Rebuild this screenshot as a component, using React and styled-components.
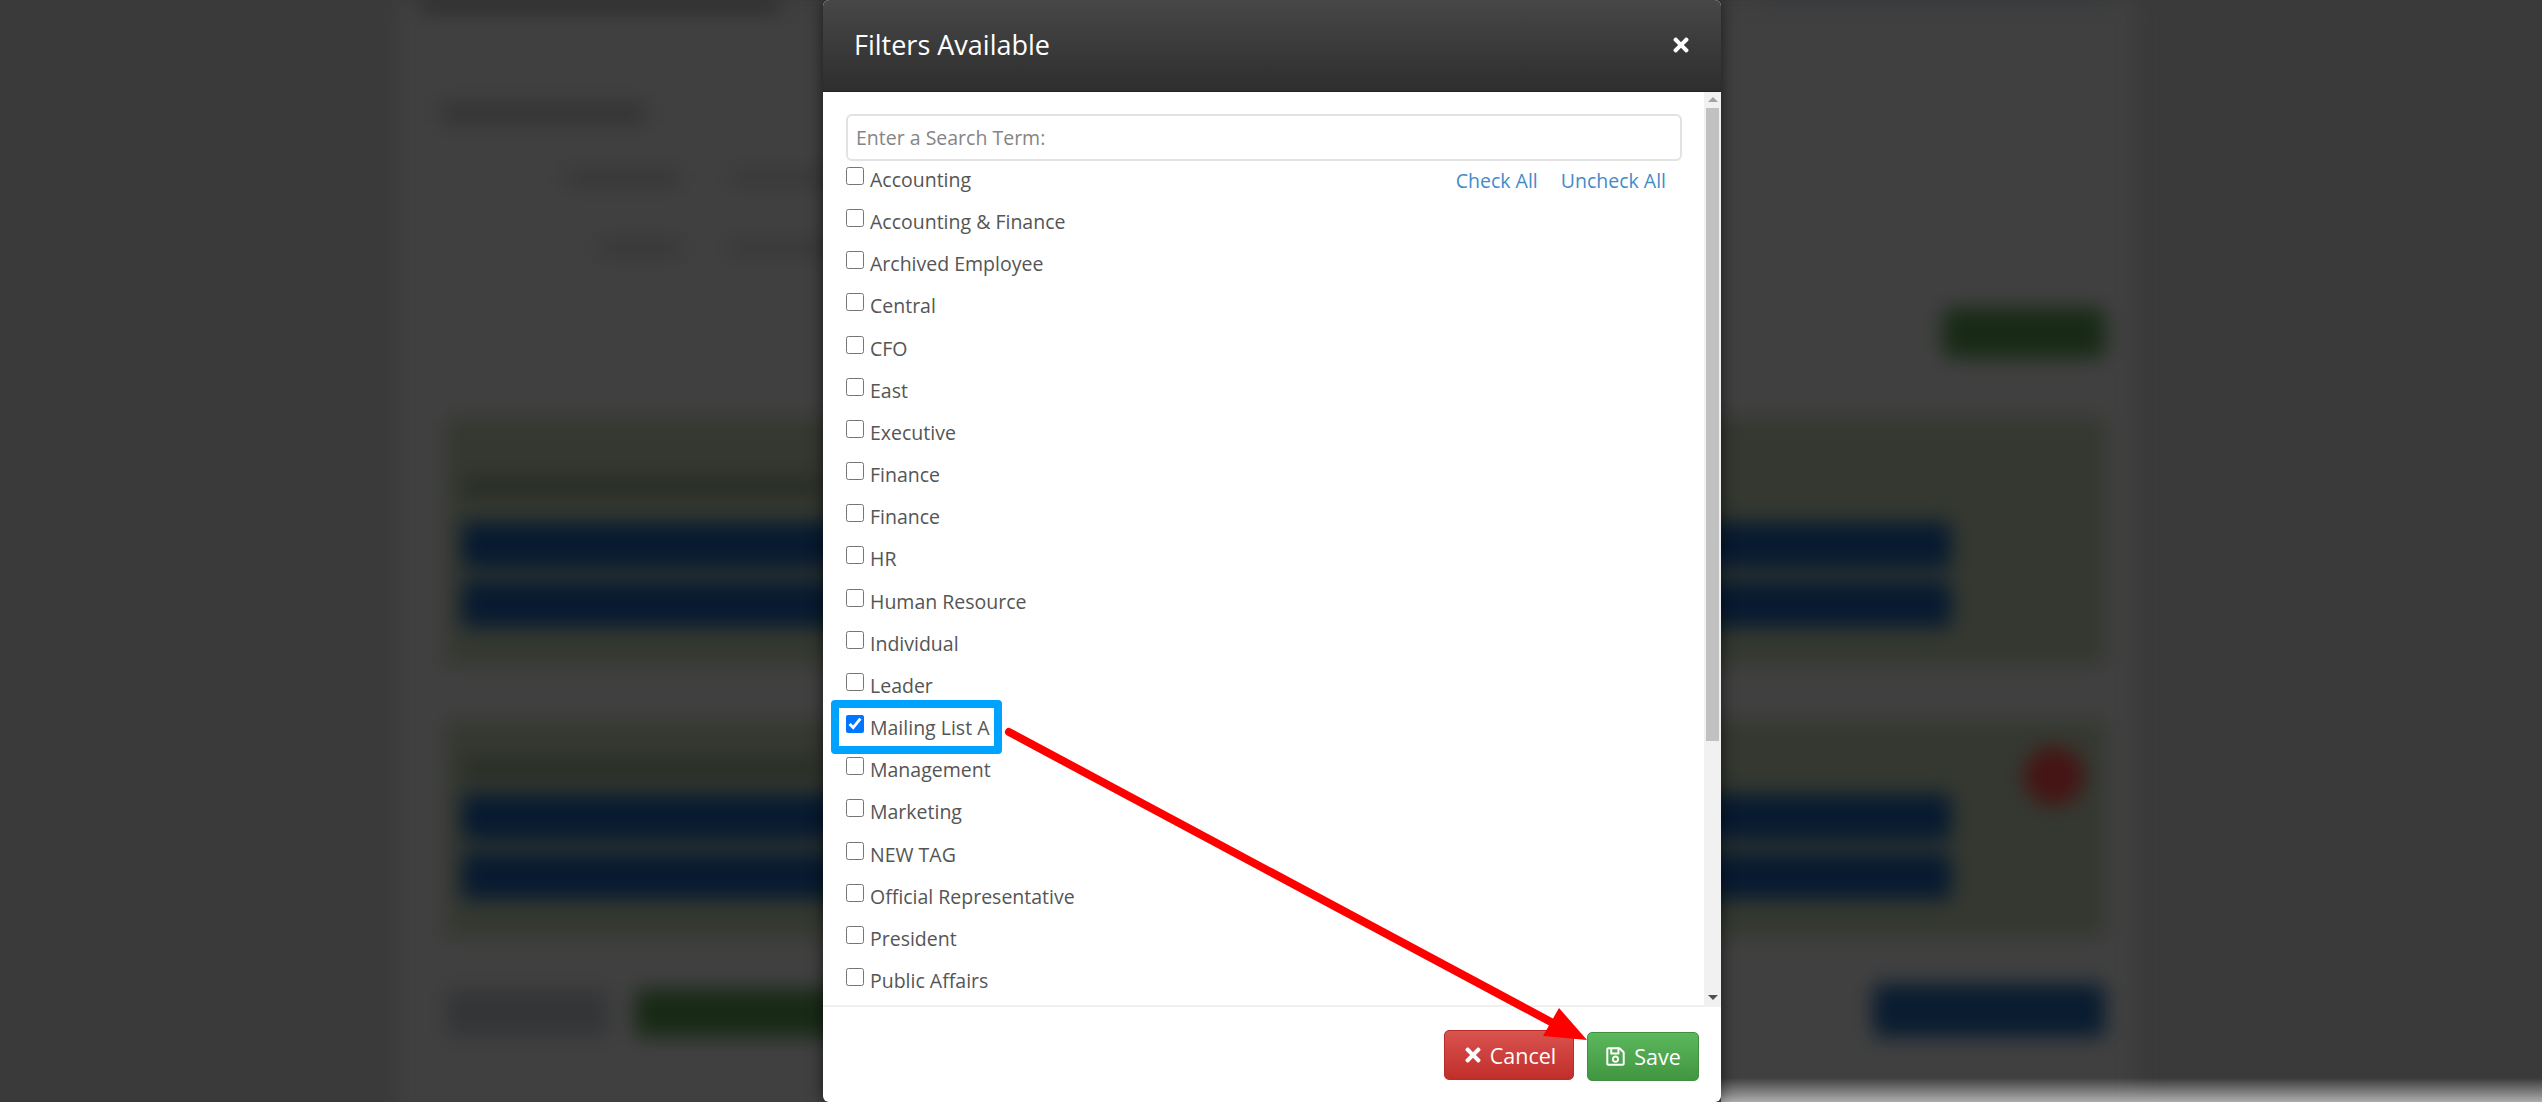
import React from 'react';
import styled, {createGlobalStyle} from 'styled-components';
import {FaTimes, FaRegSave} from 'react-icons/fa';

const GlobalStyle = createGlobalStyle`
  html, body {
    margin: 0;
    padding: 0;
    height: 100%;
    overflow: hidden;
    background: #3a3a3a;
  }
  * {
    box-sizing: border-box;
  }
`

const filters = [
  'Accounting', 'Accounting & Finance', 'Archived Employee', 'Central', 'CFO', 'East',
  'Executive', 'Finance', 'Finance', 'HR', 'Human Resource', 'Individual', 'Leader',
  'Mailing List A', 'Management', 'Marketing', 'NEW TAG', 'Official Representative',
  'President', 'Public Affairs',
];

export default function App() {
  return (
    <Screen>
      <GlobalStyle/>
      <Backdrop>
        <Sheet>
          <TopRow>
            <PageTitle/>
            <Crumbs/>
          </TopRow>
          <CardTitle/>
          <FieldRow $left={119} $top={46}><FieldLabel $width={115}/><FieldValue/></FieldRow>
          <FieldRow $left={154} $top={54}><FieldLabel $width={80}/><FieldValue/></FieldRow>
          <ActionRow><SmallButton $color="#182a16" $width={162} $height={50}/></ActionRow>
          <Panel $height={247} $top={60} $pad={58}>
            <PanelTitle $gap={26}/>
            <Bar/>
            <Bar/>
          </Panel>
          <Panel $height={216} $top={56} $pad={26}>
            <PanelHead>
              <PanelTitle $gap={14}/>
              <RemoveDot/>
            </PanelHead>
            <Bar/>
            <Bar/>
          </Panel>
          <FooterRow>
            <SmallButton $color="#343537" $width={162} $height={48}/>
            <SmallButton $color="#182a16" $width={300} $height={48}/>
            <SmallButton $color="#091c30" $width={232} $height={53} $push/>
          </FooterRow>
        </Sheet>
      </Backdrop>
      <BottomFade/>

      <Modal>
        <ModalHeader>
          <ModalTitle>Filters Available</ModalTitle>
          <CloseButton><FaTimes size={22}/></CloseButton>
        </ModalHeader>
        <ModalBody>
          <ListArea>
            <SearchInput placeholder="Enter a Search Term:"/>
            <CheckLinks>
              <CheckLink href="#">Check All</CheckLink>
              <CheckLink href="#">Uncheck All</CheckLink>
            </CheckLinks>
            {filters.map((name, i) => (
              <FilterRow key={i} $marked={name === 'Mailing List A'}>
                <FilterCheck type="checkbox" defaultChecked={name === 'Mailing List A'}/>
                <FilterName>{name}</FilterName>
              </FilterRow>
            ))}
          </ListArea>
          <ScrollTrack>
            <ScrollArrow $up/>
            <ScrollThumb/>
            <ScrollArrow/>
          </ScrollTrack>
        </ModalBody>
        <ModalFooter>
          <FooterButton $from="#d9534f" $to="#c12e2a" $border="#b92c28" $width={130} $height={50} $gap={6}>
            <FaTimes size={22}/>Cancel
          </FooterButton>
          <FooterButton $from="#5cb85c" $to="#419641" $border="#3e8f3e" $width={112} $height={49} $gap={8} $drop={2}>
            <FaRegSave size={21}/>Save
          </FooterButton>
        </ModalFooter>
      </Modal>

      <ArrowDrawing viewBox="0 0 2542 1102">
        <line x1="1009" y1="732" x2="1551" y2="1022" stroke="#ff0000" strokeWidth="8" strokeLinecap="round"/>
        <polygon points="1587,1040 1559,1008 1543,1036" fill="#ff0000"/>
      </ArrowDrawing>
    </Screen>
  )
}

const Screen = styled.div`
  position: relative;
  width: 2542px;
  height: 1102px;
  overflow: hidden;
  font-family: "Open Sans", sans-serif;
`

/* the page behind the modal, blurred */
const Backdrop = styled.div`
  height: 1102px;
  padding-left: 397px;
  filter: blur(10px);
`
const Sheet = styled.div`
  width: 1740px;
  height: 1130px;
  background: #404040;
  padding: 0 32px 0 49px;
`
const TopRow = styled.div`
  display: flex;
  justify-content: space-between;
  height: 12px;
  margin-left: -26px;
`
const PageTitle = styled.div`
  width: 360px;
  background: #2b2b2b;
`
const Crumbs = styled.div`
  width: 340px;
  height: 8px;
  background: #393c40;
`
const CardTitle = styled.div`
  width: 205px;
  height: 22px;
  margin: 90px 0 0 -5px;
  background: #343434;
`
const FieldRow = styled.div`
  display: flex;
  gap: 50px;
  height: 16px;
  margin: ${p => p.$top}px 0 0 ${p => p.$left}px;
`
const FieldLabel = styled.div`
  width: ${p => p.$width}px;
  background: #363636;
`
const FieldValue = styled.div`
  width: 110px;
  background: #383838;
`
const ActionRow = styled.div`
  display: flex;
  justify-content: flex-end;
  margin-top: 52px;
`
const SmallButton = styled.div`
  width: ${p => p.$width}px;
  height: ${p => p.$height}px;
  background: ${p => p.$color};
  border-radius: 6px;
  margin-left: ${p => p.$push ? 'auto' : 0};
`
const Panel = styled.div`
  height: ${p => p.$height}px;
  margin-top: ${p => p.$top}px;
  padding: ${p => p.$pad}px 154px 0 16px;
  background: #343830;
`
const PanelHead = styled.div`
  display: flex;
  align-items: center;
  justify-content: space-between;
  margin-right: -133px;
  margin-bottom: -11px;
`
const PanelTitle = styled.div`
  width: 360px;
  height: 20px;
  margin-bottom: ${p => p.$gap}px;
  background: #292e25;
`
const RemoveDot = styled.div`
  width: 60px;
  height: 58px;
  border-radius: 50%;
  background: #451414;
`
const Bar = styled.div`
  height: 46px;
  margin-bottom: 13px;
  background: #071a30;
  border-radius: 4px;
`
const FooterRow = styled.div`
  display: flex;
  align-items: flex-end;
  gap: 27px;
  margin-top: 47px;
`
const BottomFade = styled.div`
  position: absolute;
  left: 1721px;
  right: 0;
  bottom: 0;
  height: 24px;
  background: linear-gradient(rgba(170, 170, 170, 0), #acacac);
`

const Modal = styled.div`
  position: absolute;
  top: 0;
  left: 823px;
  width: 898px;
  height: 1102px;
  display: flex;
  flex-direction: column;
  background: #fff;
  border-radius: 6px;
  overflow: hidden;
  box-shadow: 0 0 16px rgba(0, 0, 0, .6);
`
const ModalHeader = styled.div`
  display: flex;
  align-items: center;
  justify-content: space-between;
  height: 92px;
  padding: 0 29px 2px 31px;
  background: linear-gradient(#474747, #2e2e2e);
  border-bottom: 1px solid #222;
`
const ModalTitle = styled.h4`
  margin: 0;
  font-size: 27px;
  font-weight: 400;
  color: #fff;
`
const CloseButton = styled.span`
  display: flex;
  color: #fff;
`
const ModalBody = styled.div`
  flex: 1;
  display: flex;
  min-height: 0;
`
const ListArea = styled.div`
  flex: 1;
  padding: 22px 22px 0 23px;
  overflow: hidden;
`
const SearchInput = styled.input`
  display: block;
  width: 100%;
  height: 47px;
  padding: 0 8px;
  border: 2px solid #e2e2e2;
  border-radius: 6px;
  outline: none;
  font-family: "Open Sans", sans-serif;
  font-size: 19.5px;
  color: #555;

  &::placeholder {
    color: #858585;
    opacity: 1;
  }
`
const CheckLinks = styled.div`
  float: right;
  display: flex;
  gap: 23px;
  margin: 6px 16px 0 0;
`
const CheckLink = styled.a`
  font-size: 19.5px;
  line-height: 28px;
  color: #428bca;
  text-decoration: none;
`
const FilterRow = styled.label`
  position: relative;
  display: flex;
  align-items: flex-start;
  height: 42.16px;
  padding-top: 6px;

  ${p => p.$marked && `
    &::before {
      content: '';
      box-sizing: border-box;
      position: absolute;
      top: -9px;
      left: -15px;
      width: 171px;
      height: 54px;
      border: 8px solid #00a2ff;
      border-radius: 4px;
    }
  `}
`
const FilterCheck = styled.input`
  flex: none;
  width: 18px;
  height: 18px;
  margin: 0 6px 0 0;
`
const FilterName = styled.span`
  font-size: 19.5px;
  line-height: 26px;
  color: #555;
`
const ScrollTrack = styled.div`
  flex: none;
  width: 17px;
  display: flex;
  flex-direction: column;
  align-items: center;
  background: #f1f1f1;
`
const ScrollThumb = styled.div`
  width: 13px;
  height: 633px;
  background: #c1c1c1;
`
const ScrollArrow = styled.div`
  width: 0;
  height: 0;
  margin: ${p => p.$up ? '5px 0 6px' : 'auto 0 5px'};
  border-left: 5px solid transparent;
  border-right: 5px solid transparent;
  ${p => p.$up ? 'border-bottom: 5px solid #a3a3a3;' : 'border-top: 5px solid #505050;'}
`
const ModalFooter = styled.div`
  flex: none;
  height: 97px;
  display: flex;
  justify-content: flex-end;
  align-items: flex-start;
  gap: 13px;
  padding: 23px 22px 0 0;
  border-top: 2px solid #f0f0f0;
`
const FooterButton = styled.button`
  display: flex;
  align-items: center;
  justify-content: center;
  gap: ${p => p.$gap}px;
  width: ${p => p.$width}px;
  height: ${p => p.$height}px;
  margin-top: ${p => p.$drop || 0}px;
  padding: 0;
  background: linear-gradient(${p => p.$from}, ${p => p.$to});
  border: 1px solid ${p => p.$border};
  border-radius: 5px;
  font-family: "Open Sans", sans-serif;
  font-size: 21.5px;
  color: #fff;
`
const ArrowDrawing = styled.svg`
  position: absolute;
  top: 0;
  left: 0;
  width: 2542px;
  height: 1102px;
  pointer-events: none;
`
